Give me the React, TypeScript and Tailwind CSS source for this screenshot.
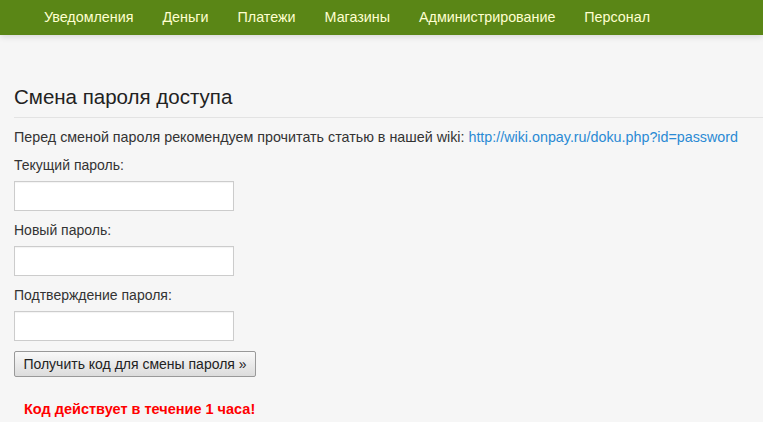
import React from "react";

const navItems = ["Уведомления", "Деньги", "Платежи", "Магазины", "Администрирование", "Персонал"];

function Field({ label }: { label: string }) {
  return (
    <div className="flex flex-col">
      <label className="text-[14px] leading-[20px] text-[#333]">{label}</label>
      <input
        type="password"
        className="mt-[6px] h-[30px] w-[220px] border border-[#ccc] bg-white outline-none shadow-[inset_0_1px_1px_rgba(0,0,0,0.05)]"
      />
    </div>
  );
}

export default function App() {
  return (
    <div
      className="min-h-[422px] w-full bg-[#f6f6f6] text-[#333]"
      style={{ fontFamily: '"Liberation Sans", Arial, sans-serif' }}
    >
      {/* Top navigation */}
      <nav className="flex h-[35px] items-center bg-[#5a8616] pl-[44px] shadow-[0_2px_6px_rgba(0,0,0,0.12)]">
        {navItems.map((item) => (
          <a key={item} href="#" className="mr-[29px] text-[14.3px] text-[#ffffd0]">
            {item}
          </a>
        ))}
      </nav>

      <main className="pl-[14px] pt-[48px]">
        <h2 className="pb-[6px] text-[20.5px] leading-[28px] text-[#222]">Смена пароля доступа</h2>
        <div className="h-px bg-[#e3e3e3]" />

        <p className="mt-[9px] text-[14.3px] leading-[20px]">
          Перед сменой пароля рекомендуем прочитать статью в нашей wiki:{" "}
          <a href="#" className="text-[#2a8ad4]">
            http://wiki.onpay.ru/doku.php?id=password
          </a>
        </p>

        <div className="mt-[8px] flex flex-col gap-[9px]">
          <Field label="Текущий пароль:" />
          <Field label="Новый пароль:" />
          <Field label="Подтверждение пароля:" />
        </div>

        <button className="mt-[10px] h-[26px] w-[242px] rounded-[2px] border border-[#999] bg-gradient-to-b from-[#f9f9f9] to-[#dcdcdc] text-[14px] text-[#222]">
          Получить код для смены пароля »
        </button>

        <p className="mt-[22px] pl-[10px] text-[14.5px] font-bold text-[#ff0000]">Код действует в течение 1 часа!</p>
      </main>
    </div>
  );
}
